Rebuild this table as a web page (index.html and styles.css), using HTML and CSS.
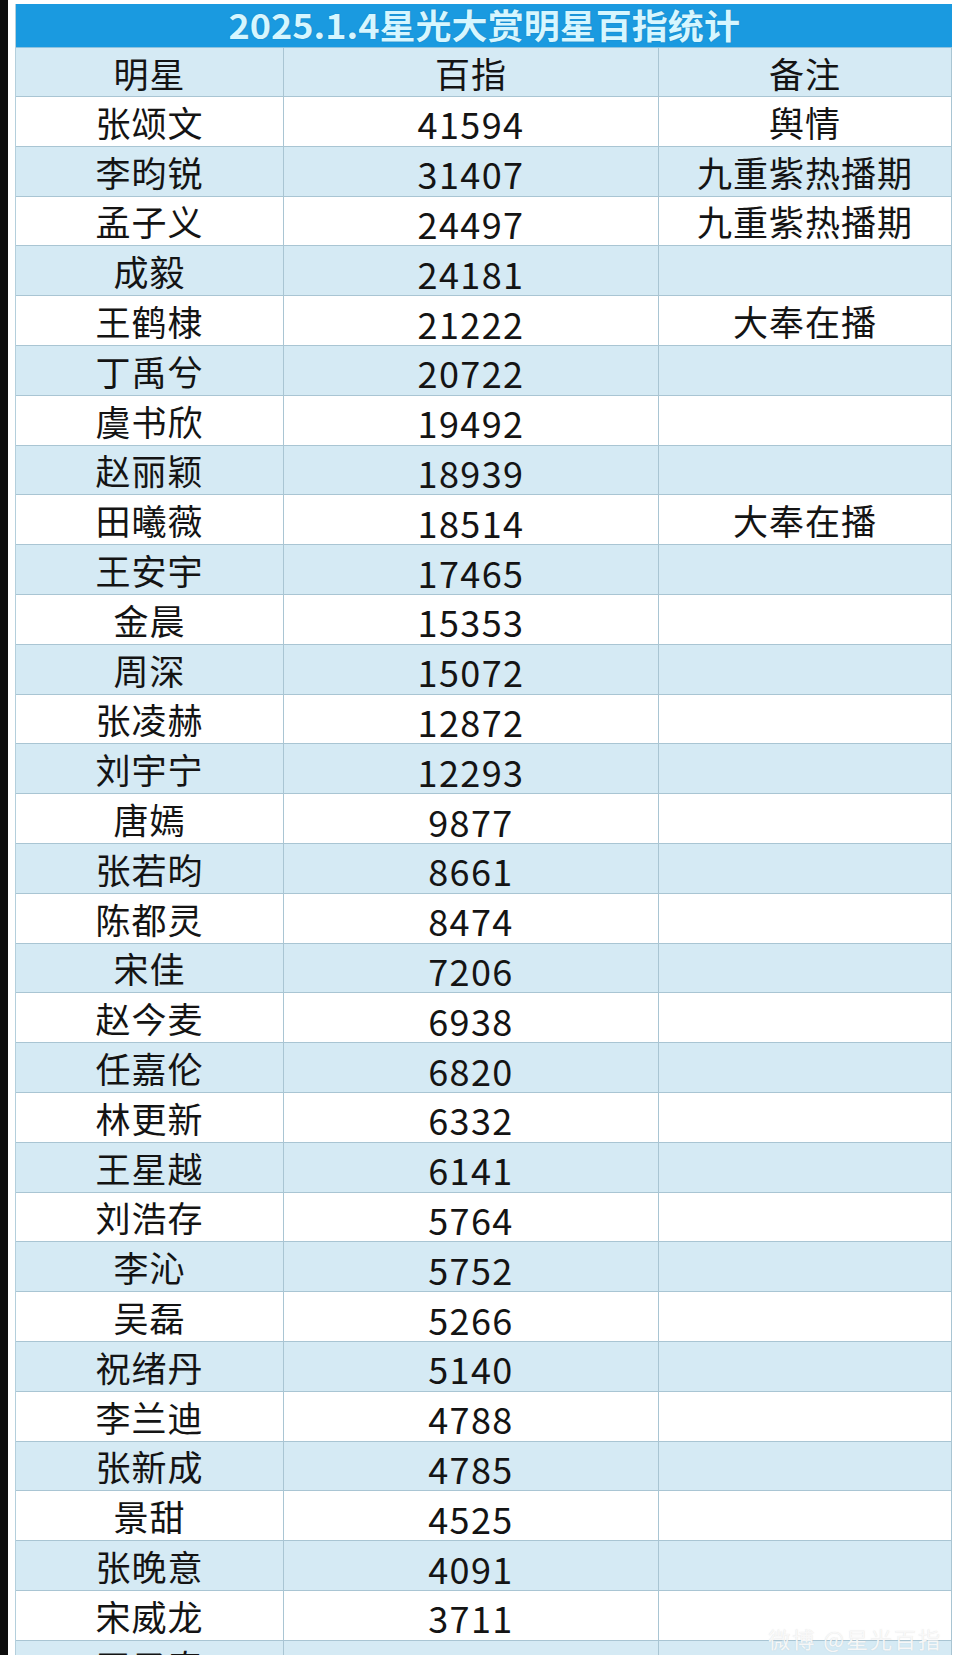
FILE: index.html
```html
<!DOCTYPE html>
<html lang="zh-CN">
<head>
<meta charset="utf-8">
<title>2025.1.4星光大赏明星百指统计</title>
<link rel="stylesheet" href="styles.css">
</head>
<body>
<div class="page">
  <div class="edge"></div>
  <div class="sheet">
    <div class="title"><span class="title-text">2025.1.4星光大赏明星百指统计</span></div>
    <div class="row alt head"><div class="cell">明星</div><div class="cell">百指</div><div class="cell">备注</div></div>
    <div class="row"><div class="cell">张颂文</div><div class="cell num">41594</div><div class="cell">舆情</div></div>
    <div class="row alt"><div class="cell">李昀锐</div><div class="cell num">31407</div><div class="cell">九重紫热播期</div></div>
    <div class="row"><div class="cell">孟子义</div><div class="cell num">24497</div><div class="cell">九重紫热播期</div></div>
    <div class="row alt"><div class="cell">成毅</div><div class="cell num">24181</div><div class="cell"></div></div>
    <div class="row"><div class="cell">王鹤棣</div><div class="cell num">21222</div><div class="cell">大奉在播</div></div>
    <div class="row alt"><div class="cell">丁禹兮</div><div class="cell num">20722</div><div class="cell"></div></div>
    <div class="row"><div class="cell">虞书欣</div><div class="cell num">19492</div><div class="cell"></div></div>
    <div class="row alt"><div class="cell">赵丽颖</div><div class="cell num">18939</div><div class="cell"></div></div>
    <div class="row"><div class="cell">田曦薇</div><div class="cell num">18514</div><div class="cell">大奉在播</div></div>
    <div class="row alt"><div class="cell">王安宇</div><div class="cell num">17465</div><div class="cell"></div></div>
    <div class="row"><div class="cell">金晨</div><div class="cell num">15353</div><div class="cell"></div></div>
    <div class="row alt"><div class="cell">周深</div><div class="cell num">15072</div><div class="cell"></div></div>
    <div class="row"><div class="cell">张凌赫</div><div class="cell num">12872</div><div class="cell"></div></div>
    <div class="row alt"><div class="cell">刘宇宁</div><div class="cell num">12293</div><div class="cell"></div></div>
    <div class="row"><div class="cell">唐嫣</div><div class="cell num">9877</div><div class="cell"></div></div>
    <div class="row alt"><div class="cell">张若昀</div><div class="cell num">8661</div><div class="cell"></div></div>
    <div class="row"><div class="cell">陈都灵</div><div class="cell num">8474</div><div class="cell"></div></div>
    <div class="row alt"><div class="cell">宋佳</div><div class="cell num">7206</div><div class="cell"></div></div>
    <div class="row"><div class="cell">赵今麦</div><div class="cell num">6938</div><div class="cell"></div></div>
    <div class="row alt"><div class="cell">任嘉伦</div><div class="cell num">6820</div><div class="cell"></div></div>
    <div class="row"><div class="cell">林更新</div><div class="cell num">6332</div><div class="cell"></div></div>
    <div class="row alt"><div class="cell">王星越</div><div class="cell num">6141</div><div class="cell"></div></div>
    <div class="row"><div class="cell">刘浩存</div><div class="cell num">5764</div><div class="cell"></div></div>
    <div class="row alt"><div class="cell">李沁</div><div class="cell num">5752</div><div class="cell"></div></div>
    <div class="row"><div class="cell">吴磊</div><div class="cell num">5266</div><div class="cell"></div></div>
    <div class="row alt"><div class="cell">祝绪丹</div><div class="cell num">5140</div><div class="cell"></div></div>
    <div class="row"><div class="cell">李兰迪</div><div class="cell num">4788</div><div class="cell"></div></div>
    <div class="row alt"><div class="cell">张新成</div><div class="cell num">4785</div><div class="cell"></div></div>
    <div class="row"><div class="cell">景甜</div><div class="cell num">4525</div><div class="cell"></div></div>
    <div class="row alt"><div class="cell">张晚意</div><div class="cell num">4091</div><div class="cell"></div></div>
    <div class="row"><div class="cell">宋威龙</div><div class="cell num">3711</div><div class="cell"></div></div>
    <div class="row alt"><div class="cell">王子奇</div><div class="cell num">3561</div><div class="cell"></div></div>
  </div>
  <div class="watermark">微博 @星光百指</div>
</div>
</body>
</html>
```

FILE: styles.css
```css
html, body {
  margin: 0;
  padding: 0;
  background: #ffffff;
}

body {
  font-family: "Noto Sans CJK SC", "Noto Sans", sans-serif;
  color: #141414;
  height: 1655px;
  overflow: hidden;
}

.page {
  position: relative;
  display: flex;
  align-items: flex-start;
  height: 1655px;
}

.edge {
  width: 8px;
  align-self: stretch;
  background: #0c0c0c;
}

.sheet {
  margin-left: 7px;
  margin-top: 4px;
  width: 937px;
  display: flex;
  flex-direction: column;
  border-left: 1px solid #b4cfdc;
  box-sizing: border-box;
}

.title {
  height: 44px;
  background: #1a9ae0;
  display: flex;
  align-items: center;
  justify-content: center;
  border-bottom: 1px solid #8fc3df;
  box-sizing: border-box;
  flex: none;
}

.title-text {
  display: inline-block;
  font-size: 34px;
  font-weight: 700;
  color: #d6f6ff;
  line-height: 1;
  transform: scaleX(1.06);
  margin-top: -1px;
  text-shadow: 0 0 1px rgba(20, 80, 120, 0.6);
}

.row {
  display: grid;
  grid-template-columns: 268px 375px 293px;
  height: 49.8px;
  flex: none;
  background: #ffffff;
}

.row.head {
  height: 49px;
}

.row.alt {
  background: #d5eaf4;
}

.cell {
  display: flex;
  align-items: center;
  justify-content: center;
  border-right: 1px solid #a9c5d3;
  border-bottom: 1px solid #a9c5d3;
  box-sizing: border-box;
  font-size: 35px;
  letter-spacing: 1px;
  line-height: 1;
  white-space: nowrap;
}

.num {
  font-size: 36px;
  letter-spacing: 1.4px;
  padding-top: 4px;
}

.watermark {
  position: absolute;
  right: 18px;
  top: 1622px;
  font-size: 22px;
  color: rgba(250, 250, 250, 0.95);
  text-shadow: 0 0 1px rgba(160, 160, 160, 0.35);
  letter-spacing: 2px;
}
```
